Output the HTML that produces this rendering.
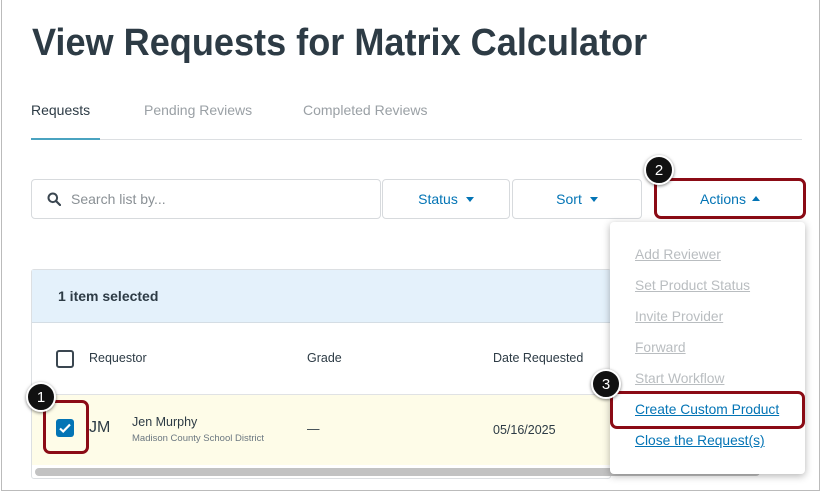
<!DOCTYPE html>
<html><head><meta charset="utf-8"><style>
*{box-sizing:border-box;margin:0;padding:0}
body{width:822px;height:493px;background:#fff;font-family:"Liberation Sans",sans-serif;position:relative;overflow:hidden;color:#2d3b45}
.a{position:absolute}
.frame{left:1px;top:0;width:819px;height:491px;border:1px solid #bbb;border-top:none}
.title{left:32px;top:22px;font-size:38px;font-weight:bold;white-space:nowrap;transform:scaleX(0.95);transform-origin:left;color:#2d3b45}
.tab{top:102px;font-size:14px;color:#9aa0a5}
.btn{border:1px solid #d7dadd;border-radius:4px;background:#fff;color:#0374b5;font-size:14px;display:flex;align-items:center;justify-content:center}
.red{border:3px solid #8b0b15;border-radius:7px}
.badge{width:30px;height:30px;border-radius:50%;background:#111;color:#fff;font-size:15px;display:flex;align-items:center;justify-content:center;border:2px solid #fff;box-shadow:0 1px 3px rgba(0,0,0,.5)}
.mi{left:635px;font-size:13.8px;color:#b9bdc0;text-decoration:underline}
.tri{display:inline-block;width:0;height:0;border-left:4px solid transparent;border-right:4px solid transparent;margin-left:8px}
</style></head><body>
<div class="a frame"></div>
<div class="a title">View Requests for Matrix Calculator</div>
<div class="a tab" style="left:31px;color:#2d3b45">Requests</div>
<div class="a tab" style="left:144px">Pending Reviews</div>
<div class="a tab" style="left:303px">Completed Reviews</div>
<div class="a" style="left:31px;top:139px;width:771px;height:1px;background:#dcdfe2"></div>
<div class="a" style="left:31px;top:138px;width:69px;height:2px;background:#4aa3c0"></div>

<div class="a btn" style="left:31px;top:179px;width:350px;height:40px;justify-content:flex-start;padding-left:15px;color:#8a9095">
<svg width="14" height="14" viewBox="0 0 14 14" style="margin-right:10px"><circle cx="5.8" cy="5.8" r="4.3" fill="none" stroke="#3a4650" stroke-width="2"/><path d="M9 9l4 4" stroke="#3a4650" stroke-width="2.2" stroke-linecap="round"/></svg>Search list by...</div>
<div class="a btn" style="left:382px;top:179px;width:128px;height:40px">Status<span class="tri" style="border-top:5px solid #0374b5"></span></div>
<div class="a btn" style="left:512px;top:179px;width:130px;height:40px">Sort<span class="tri" style="border-top:5px solid #0374b5"></span></div>
<div class="a btn" style="left:654px;top:178px;width:152px;height:41px;border:none">Actions<span class="tri" style="border-bottom:5px solid #0374b5;margin-left:6px"></span></div>
<div class="a red" style="left:654px;top:178px;width:152px;height:41px"></div>

<div class="a" style="left:31px;top:269px;width:580px;height:210px;border:1px solid #dcdfe2;border-radius:3px"></div>
<div class="a" style="left:32px;top:270px;width:578px;height:53px;background:#e4f1fb;border-bottom:1px solid #d4dde4"></div>
<div class="a" style="left:58px;top:288px;font-size:14px;font-weight:bold;color:#2d3b45">1 item selected</div>
<div class="a" style="left:56px;top:350px;width:18px;height:18px;border:2px solid #3a4650;border-radius:3px"></div>
<div class="a" style="left:89px;top:351px;font-size:12.5px">Requestor</div>
<div class="a" style="left:307px;top:351px;font-size:12.5px">Grade</div>
<div class="a" style="left:493px;top:351px;font-size:12.5px">Date Requested</div>
<div class="a" style="left:32px;top:394px;width:578px;height:1px;background:#e0e2e4"></div>
<div class="a" style="left:32px;top:395px;width:578px;height:70px;background:#fefce8"></div>
<div class="a" style="left:56px;top:419px;width:18px;height:18px;background:#0374b5;border-radius:3px"><svg width="18" height="18" viewBox="0 0 18 18"><path d="M4 9.5l3.2 3L14 5.5" fill="none" stroke="#fff" stroke-width="2.2"/></svg></div>
<div class="a" style="left:89px;top:419px;font-size:16px">JM</div>
<div class="a" style="left:132px;top:415px;font-size:12.5px">Jen Murphy</div>
<div class="a" style="left:132px;top:433px;font-size:9.5px;color:#6b7780">Madison County School District</div>
<div class="a" style="left:307px;top:422px;font-size:12.5px">—</div>
<div class="a" style="left:493px;top:423px;font-size:12.5px">05/16/2025</div>
<div class="a" style="left:35px;top:468px;width:725px;height:8px;background:#c2c2c2;border-radius:4px"></div>
<div class="a red" style="left:43px;top:400px;width:46px;height:54px"></div>

<div class="a" style="left:610px;top:222px;width:195px;height:252px;background:#fff;border-radius:4px;box-shadow:0 2px 8px rgba(0,0,0,.3)"></div>
<div class="a mi" style="top:247px">Add Reviewer</div>
<div class="a mi" style="top:278px">Set Product Status</div>
<div class="a mi" style="top:309px">Invite Provider</div>
<div class="a mi" style="top:340px">Forward</div>
<div class="a mi" style="top:371px">Start Workflow</div>
<div class="a mi" style="top:402px;color:#0374b5">Create Custom Product</div>
<div class="a mi" style="top:433px;color:#0374b5">Close the Request(s)</div>
<div class="a red" style="left:610px;top:391px;width:195px;height:38px"></div>

<div class="a badge" style="left:26px;top:382px">1</div>
<div class="a badge" style="left:644px;top:155px">2</div>
<div class="a badge" style="left:591px;top:369px">3</div>
</body></html>
